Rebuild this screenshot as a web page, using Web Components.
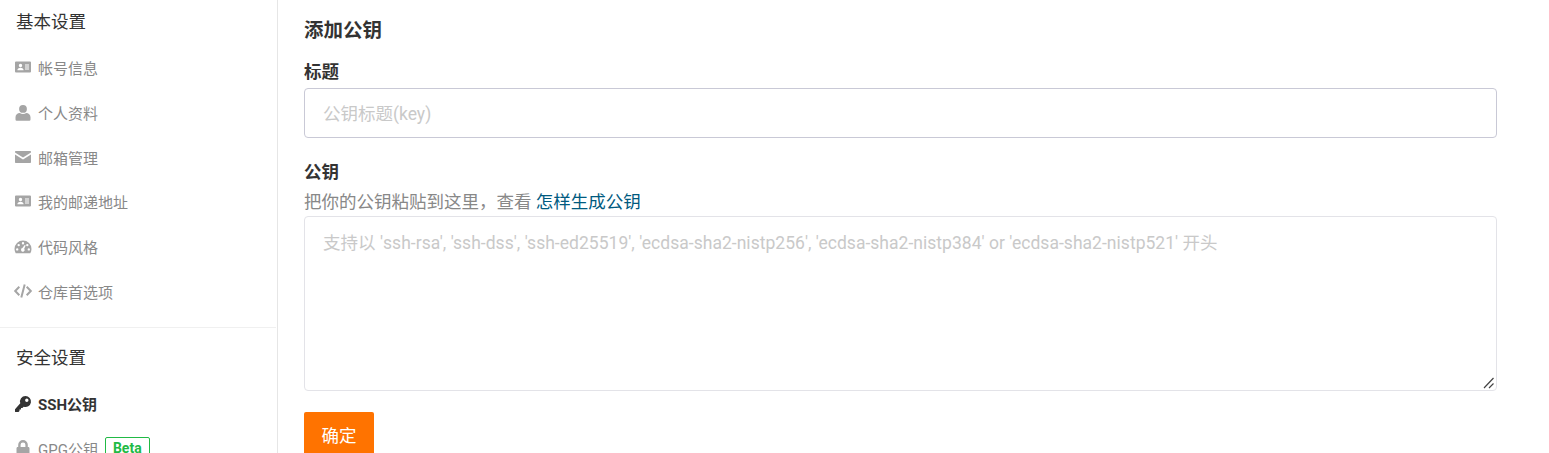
<!DOCTYPE html>
<html lang="zh">
<head>
<meta charset="utf-8">
<title>SSH公钥</title>
<style>
    html, body {
        margin: 0;
        height: 453px;
        overflow: hidden;
        background: #fff;
        color: #333;
        font-family: Roboto, "Noto Sans CJK SC", sans-serif;
    }
</style>
</head>
<body>
<settings-page>
    <settings-sidebar slot="side">
        <nav-group title="基本设置">
            <nav-item icon="card">帐号信息</nav-item>
            <nav-item icon="user">个人资料</nav-item>
            <nav-item icon="mail">邮箱管理</nav-item>
            <nav-item icon="card">我的邮递地址</nav-item>
            <nav-item icon="gauge">代码风格</nav-item>
            <nav-item icon="code">仓库首选项</nav-item>
        </nav-group>
        <nav-group title="安全设置" divided>
            <nav-item icon="key" active>SSH公钥</nav-item>
            <nav-item icon="lock">GPG公钥<beta-tag>Beta</beta-tag></nav-item>
        </nav-group>
    </settings-sidebar>
    <key-form></key-form>
</settings-page>

<script>
const ICONS = {
    card: '<path fill-rule="evenodd" d="M1 1.500h14a1 1 0 0 1 1 1v9a1 1 0 0 1-1 1H1a1 1 0 0 1-1-1v-9a1 1 0 0 1 1-1zm4.500 2.300a1.700 1.700 0 1 0 0 3.400 1.700 1.700 0 0 0 0-3.400zM2.400 10.300h6.200c0-1.800-1.200-2.600-3.100-2.600s-3.100.8-3.100 2.600zM10 4.500v1h4v-1zm0 2v1h4v-1zm0 2v1h4v-1z"/>',
    user: '<path d="M8 0a3.900 3.900 0 1 1 0 7.800A3.900 3.900 0 0 1 8 0zM.5 14.500v-2.200C.5 9.900 2.400 8 4.800 8c.9.600 2 .9 3.200.9s2.300-.3 3.200-.9c2.400 0 4.300 1.900 4.300 4.300v2.200a1.200 1.200 0 0 1-1.200 1.200H1.700a1.200 1.200 0 0 1-1.200-1.200z"/>',
    mail: '<path d="M1 2h14c.6 0 1 .4 1 1v.6L8 8.600 0 3.600V3c0-.6.4-1 1-1zM0 5.400l8 5 8-5V13c0 .6-.4 1-1 1H1c-.6 0-1-.4-1-1z"/>',
    gauge: '<path fill-rule="evenodd" d="M8 1.500a8.500 8.500 0 0 1 8.500 8.500c0 1.500-.4 2.900-1.200 4.200H.7A8.400 8.400 0 0 1-.5 10 8.500 8.500 0 0 1 8 1.500zM8 3a1.200 1.200 0 1 0 0 2.400A1.200 1.200 0 0 0 8 3zM3.700 4.900a1.200 1.200 0 1 0 0 2.400 1.200 1.200 0 0 0 0-2.400zM12.300 4.900a1.200 1.200 0 1 0 0 2.400 1.200 1.200 0 0 0 0-2.400zM2.200 9.200a1.200 1.200 0 1 0 0 2.400 1.200 1.200 0 0 0 0-2.400zM13.800 9.200a1.200 1.200 0 1 0 0 2.400 1.200 1.200 0 0 0 0-2.400zM9.700 6 7.400 9.100a1.800 1.800 0 1 0 1.800.6l1.500-3.300z"/>',
    code: '<path fill="none" stroke="currentColor" stroke-width="2" d="M4.300 3.800.2 8l4.100 4.200M11.700 3.800 15.800 8l-4.100 4.200M9.700 1.500 6.300 14.500"/>',
    key: '<path fill-rule="evenodd" d="M10.500 0A5.500 5.500 0 1 1 8.700 10.700L7.400 12H6v1.500H4.500V15L3.500 16H.6a.6.6 0 0 1-.6-.6v-2.200L5.300 7.300A5.500 5.500 0 0 1 10.500 0zm1.300 2.500a1.700 1.700 0 1 0 0 3.400 1.700 1.700 0 0 0 0-3.400z"/>',
    lock: '<path fill-rule="evenodd" d="M8 0a4.800 4.800 0 0 1 4.800 4.800V7h.4c.8 0 1.300.6 1.300 1.400v6.200c0 .8-.5 1.400-1.300 1.400H2.800c-.8 0-1.300-.6-1.300-1.400V8.400C1.500 7.600 2 7 2.800 7h.4V4.800A4.800 4.800 0 0 1 8 0zm0 2.400a2.400 2.400 0 0 0-2.400 2.400V7h4.800V4.800A2.400 2.400 0 0 0 8 2.400z"/>'
};

class SettingsPage extends HTMLElement {
    constructor() {
        super();
        this.attachShadow({ mode: 'open' }).innerHTML = `
            <style>
                :host { display: grid; grid-template-columns: 278px 1fr; height: 453px; overflow: hidden; }
            </style>
            <slot name="side"></slot>
            <slot></slot>`;
    }
}

class SettingsSidebar extends HTMLElement {
    constructor() {
        super();
        this.attachShadow({ mode: 'open' }).innerHTML = `
            <style>
                :host { display: block; height: 453px; border-right: 1px solid #e6e6e6; box-sizing: border-box; padding: 10px 1px 0 0; overflow: hidden; }
            </style>
            <slot></slot>`;
    }
}

class NavGroup extends HTMLElement {
    constructor() {
        super();
        this.attachShadow({ mode: 'open' }).innerHTML = `
            <style>
                :host { display: block; }
                :host([divided]) { border-top: 1px solid #f0f0f0; margin-top: 13.600px; padding-top: 17.600px; }
                h3 { margin: 0 0 11.500px; padding-left: 16px; font-size: 17.500px; font-weight: 400; line-height: 24px; color: #333; }
            </style>
            <h3></h3>
            <slot></slot>`;
    }
    connectedCallback() {
        this.shadowRoot.querySelector('h3').textContent = this.getAttribute('title');
        this.removeAttribute('title');
    }
}

class NavItem extends HTMLElement {
    constructor() {
        super();
        this.attachShadow({ mode: 'open' }).innerHTML = `
            <style>
                :host { display: flex; align-items: center; height: 44.700px; padding-left: 15px; font-size: 15px; color: #888; }
                :host([active]) { color: #333; font-weight: 700; }
                svg { width: 16px; height: 16px; margin-right: 7px; flex: none; fill: currentColor; color: #a5a5a5; overflow: visible; }
                :host([active]) svg { color: #333; }
            </style>
            <svg viewBox="0 0 16 16"></svg>
            <slot></slot>`;
    }
    connectedCallback() {
        this.shadowRoot.querySelector('svg').innerHTML = ICONS[this.getAttribute('icon')];
    }
}

class BetaTag extends HTMLElement {
    constructor() {
        super();
        this.attachShadow({ mode: 'open' }).innerHTML = `
            <style>
                :host { display: inline-block; margin-left: 7px; padding: 0 7px; border: 1px solid #21ba45; border-radius: 2px; color: #21ba45; font-size: 14px; font-weight: 700; line-height: 20px; }
            </style>
            <slot></slot>`;
    }
}

class KeyForm extends HTMLElement {
    constructor() {
        super();
        this.attachShadow({ mode: 'open' }).innerHTML = `
            <style>
                :host { display: block; padding: 17px 52px 0 26px; font-size: 17.500px; line-height: 24px; color: #333; }
                h4 { margin: 0 0 15px; font-size: 19.500px; line-height: 28px; font-weight: 700; }
                label { display: block; font-weight: 700; line-height: 24px; }
                .hint { display: block; margin-top: 5px; color: #888; line-height: 26px; }
                a { color: #005a7f; text-decoration: none; }
                input, textarea {
                    display: block; width: 100%; box-sizing: border-box; margin: 0;
                    font: inherit; outline: none; color: #333; background: #fff;
                    border-radius: 4px;
                }
                input { height: 50px; margin-top: 4px; padding: 2px 18px 0; border: 1px solid #c9c9d6; }
                textarea { height: 175px; margin-top: 1px; padding: 14px 18px 12px; border: 1px solid #e3e3e8; resize: vertical; letter-spacing: .03px; }
                textarea::-webkit-resizer {
                    background: url("data:image/svg+xml,%3Csvg xmlns='http://www.w3.org/2000/svg' width='15' height='15'%3E%3Cpath d='M3 13 12.500 3M8 13l4.500-4.500' stroke='%23444' stroke-width='1.200' fill='none'/%3E%3C/svg%3E") no-repeat;
                }
                ::placeholder { color: #c9c9c9; opacity: 1; }
                .field { margin-bottom: 22px; }
                .field:last-of-type { margin-bottom: 21px; }
                button {
                    display: block; width: 70px; height: 48px; padding: 0; border: 0; border-radius: 2px;
                    background: #ff7300; color: #fff; font: inherit; font-size: 17.500px;
                }
            </style>
            <h4>添加公钥</h4>
            <div class="field">
                <label>标题</label>
                <input placeholder="公钥标题(key)">
            </div>
            <div class="field">
                <label>公钥</label>
                <span class="hint">把你的公钥粘贴到这里，查看 <a href="#">怎样生成公钥</a></span>
                <textarea placeholder="支持以 'ssh-rsa', 'ssh-dss', 'ssh-ed25519', 'ecdsa-sha2-nistp256', 'ecdsa-sha2-nistp384' or 'ecdsa-sha2-nistp521' 开头"></textarea>
            </div>
            <button type="button">确定</button>`;
    }
}

customElements.define('settings-page', SettingsPage);
customElements.define('settings-sidebar', SettingsSidebar);
customElements.define('nav-group', NavGroup);
customElements.define('nav-item', NavItem);
customElements.define('beta-tag', BetaTag);
customElements.define('key-form', KeyForm);
</script>
</body>
</html>
